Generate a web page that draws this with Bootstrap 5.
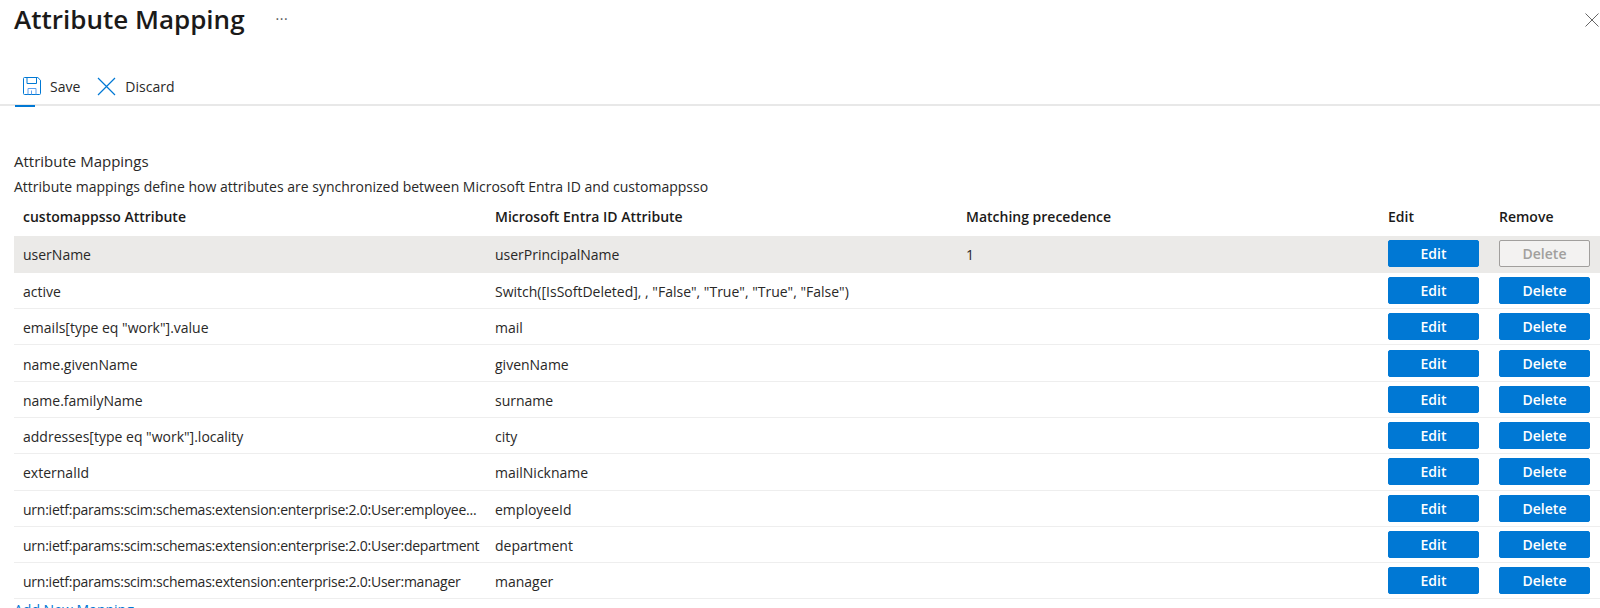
<!DOCTYPE html>
<html lang="en"><head><meta charset="utf-8"><title>Attribute Mapping</title>
<link href="https://cdn.jsdelivr.net/npm/bootstrap@5.3.0/dist/css/bootstrap.min.css" rel="stylesheet">
<style>
html,body{height:608px;overflow:hidden;background:#fff}
body{font-family:"Open Sans","Noto Sans",sans-serif;font-size:14px;color:#292827}
.blade-head{height:76px;padding:1px 14px 0}
.blade-title{font-family:"Open Sans",sans-serif;font-size:26px;font-weight:600;line-height:36px;color:#1b1a19;margin:0}
.more-dots{font-size:14px;line-height:36px;color:#555;margin-left:31px;letter-spacing:.5px}
.blade-close{position:absolute;top:13px;right:1px;padding:0;border:0;background:none;line-height:0;width:14px}
.cmd-bar{height:30px;padding-left:23px;gap:18px;border-bottom:2px solid #e8e8e8;position:relative}
.cmd-bar::after{content:"";position:absolute;left:15px;bottom:-3px;width:20px;height:2px;background:#0078d4}
.cmd-item{padding:0;border:0;background:none;color:#292827;font-size:14px;gap:9px;height:20px}
.cmd-item+.cmd-item{margin-left:-1px}
.map-section{padding:46px 0 0 14px}
.sec-title{font-size:15px;line-height:18px;margin:0 0 8px}
.sec-desc{font-size:14px;line-height:18px;margin:0}
.map-table{table-layout:fixed;width:1586px;margin:0;--bs-table-color:#292827;--bs-table-border-color:#eee}
.map-table th{font-weight:600;font-size:14px;color:#1b1a19;height:40px;padding:0 9px;border:0;vertical-align:middle}
.map-table td{height:36.3px;padding:2px 9px 0;vertical-align:middle;font-size:14px;white-space:nowrap;overflow:hidden;text-overflow:clip;border-bottom:1px solid #eee}
.map-table td.urn-name{letter-spacing:-.24px}
.map-table tr.sel td{background:#ebeae8;border-bottom-color:#ebeae8}
.map-table td.act{padding:0 0 0 9px;overflow:visible}
.act-btn{display:block;width:91px;height:27px;padding:0;font-size:14px;font-weight:600;line-height:25px;border-radius:2px;background:#0078d4;border:1px solid #0078d4;color:#fff}
.act-btn:disabled{background:#f3f2f1;border-color:#a19f9d;color:#a19f9d;opacity:1}
.add-link{display:block;font-size:14px;line-height:18px;color:#0078d4;text-decoration:none;margin-top:2px}
</style></head><body>
<div class="position-relative">
<header class="blade-head d-flex align-items-start">
<h1 class="blade-title">Attribute Mapping</h1><span class="more-dots">···</span>
<button class="blade-close" aria-label="Close"><svg width="14" height="14" viewBox="0 0 14 14"><path d="M0.5 0.5L13.5 13.5M13.5 0.5L0.5 13.5" stroke="#666" stroke-width="1" fill="none"/></svg></button>
</header>
<nav class="cmd-bar d-flex align-items-start">
<button class="cmd-item d-flex align-items-center"><svg width="18" height="18" viewBox="0 0 18 18" fill="none"><path d="M.5 1.5a1 1 0 0 1 1-1h13.3l2.7 2.7v13.3a1 1 0 0 1-1 1h-15a1 1 0 0 1-1-1z" stroke="#0078d4"/><path d="M4 .5v6h9.5v-6" stroke="#0078d4"/><path d="M5 17.5v-6h8v6M8.5 13.5v4" stroke="#5ea0ef"/></svg>Save</button>
<button class="cmd-item d-flex align-items-center"><svg width="19" height="19" viewBox="0 0 19 19" fill="none"><path d="M1 1l17 17M18 1L1 18" stroke="#0078d4" stroke-width="1.2"/></svg>Discard</button>
</nav>
<section class="map-section">
<p class="sec-title">Attribute Mappings</p>
<p class="sec-desc">Attribute mappings define how attributes are synchronized between Microsoft Entra ID and customappsso</p>
<table class="table map-table">
<colgroup><col style="width:472px"><col style="width:471px"><col style="width:422px"><col style="width:111px"><col style="width:110px"></colgroup>
<thead><tr><th>customappsso Attribute</th><th>Microsoft Entra ID Attribute</th><th>Matching precedence</th><th>Edit</th><th>Remove</th></tr></thead>
<tbody>
<tr class="sel"><td>userName</td><td>userPrincipalName</td><td>1</td><td class="act"><button class="btn act-btn">Edit</button></td><td class="act"><button class="btn act-btn" disabled>Delete</button></td></tr>
<tr><td>active</td><td>Switch([IsSoftDeleted], , "False", "True", "True", "False")</td><td></td><td class="act"><button class="btn act-btn">Edit</button></td><td class="act"><button class="btn act-btn">Delete</button></td></tr>
<tr><td>emails[type eq "work"].value</td><td>mail</td><td></td><td class="act"><button class="btn act-btn">Edit</button></td><td class="act"><button class="btn act-btn">Delete</button></td></tr>
<tr><td>name.givenName</td><td>givenName</td><td></td><td class="act"><button class="btn act-btn">Edit</button></td><td class="act"><button class="btn act-btn">Delete</button></td></tr>
<tr><td>name.familyName</td><td>surname</td><td></td><td class="act"><button class="btn act-btn">Edit</button></td><td class="act"><button class="btn act-btn">Delete</button></td></tr>
<tr><td>addresses[type eq "work"].locality</td><td>city</td><td></td><td class="act"><button class="btn act-btn">Edit</button></td><td class="act"><button class="btn act-btn">Delete</button></td></tr>
<tr><td>externalId</td><td>mailNickname</td><td></td><td class="act"><button class="btn act-btn">Edit</button></td><td class="act"><button class="btn act-btn">Delete</button></td></tr>
<tr><td class="urn-name">urn:ietf:params:scim:schemas:extension:enterprise:2.0:User:employee...</td><td>employeeId</td><td></td><td class="act"><button class="btn act-btn">Edit</button></td><td class="act"><button class="btn act-btn">Delete</button></td></tr>
<tr><td class="urn-name">urn:ietf:params:scim:schemas:extension:enterprise:2.0:User:department</td><td>department</td><td></td><td class="act"><button class="btn act-btn">Edit</button></td><td class="act"><button class="btn act-btn">Delete</button></td></tr>
<tr><td class="urn-name">urn:ietf:params:scim:schemas:extension:enterprise:2.0:User:manager</td><td>manager</td><td></td><td class="act"><button class="btn act-btn">Edit</button></td><td class="act"><button class="btn act-btn">Delete</button></td></tr>
</tbody></table>
<a class="add-link" href="#">Add New Mapping</a>
</section>
</div>
</body></html>
